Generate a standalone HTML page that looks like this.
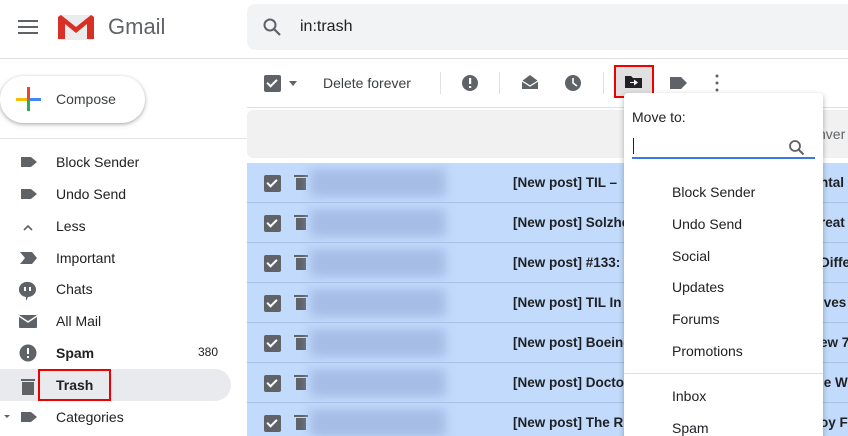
<!DOCTYPE html>
<html><head><style>
*{margin:0;padding:0;box-sizing:border-box}
html,body{width:848px;height:436px;overflow:hidden}
body{background:#fff;font-family:"Liberation Sans",Arial,sans-serif;color:#202124;position:relative}
.a{position:absolute;white-space:nowrap}
.side{font-size:14px;color:#202124}
.side div.t{position:absolute;left:56px}
.row{position:absolute;left:247px;width:601px;height:40px;background:#c2dbfc;border-bottom:1px solid #a9c1e6;overflow:hidden}
.cb{position:absolute;width:17px;height:17px;background:#5f6368;border-radius:2px}
.cb:after{content:"";position:absolute;left:5px;top:2px;width:4px;height:8px;border:solid #fff;border-width:0 2px 2px 0;transform:rotate(45deg)}
.subj{position:absolute;left:266px;top:12px;font-size:13.5px;font-weight:bold;color:#202124;white-space:nowrap}
.blur{position:absolute;left:63px;top:6px;width:136px;height:28px;background:#a6bde6;filter:blur(5px)}
.menu div.i{position:absolute;left:48px;font-size:14px;color:#202124}
</style></head><body>
<div class="a" style="left:18px;top:20px;width:20px;height:2px;background:#5f6368;box-shadow:0 6px 0 #5f6368,0 12px 0 #5f6368"></div>
<svg class="a" style="left:57px;top:14px" width="38" height="27" viewBox="0 0 38 27"><rect x="1" y="1" width="36" height="25" rx="2" fill="#ececec"/><path d="M1 3v22h7V10l11 9 11-9v15h7V3l-3-2-15 12L4 1z" fill="#d93025"/></svg>
<div class="a" style="left:108px;top:14px;font-size:22px;color:#5f6368">Gmail</div>
<div class="a" style="left:247px;top:4px;width:601px;height:46px;background:#f1f3f4;border-radius:8px 0 0 8px"></div>
<svg class="a" style="left:262px;top:17px" width="20" height="20" viewBox="0 0 20 20"><circle cx="8" cy="8" r="5.5" fill="none" stroke="#5f6368" stroke-width="2"/><path d="M12 12l6 6" stroke="#5f6368" stroke-width="2.2"/></svg>
<div class="a" style="left:300px;top:18px;font-size:16px">in:trash</div>
<div class="a" style="left:0;top:58px;width:848px;height:1px;background:#e0e0e0"></div>
<div class="a" style="left:0;top:76px;width:145px;height:47px;border-radius:24px;background:#fff;box-shadow:0 1px 3px rgba(60,64,67,.35),0 2px 6px rgba(60,64,67,.15)"></div>
<div class="a" style="left:27px;top:87px;width:3px;height:12px;background:#ea4335"></div>
<div class="a" style="left:27px;top:99px;width:3px;height:12px;background:#34a853"></div>
<div class="a" style="left:16px;top:98px;width:11px;height:3px;background:#fbbc04"></div>
<div class="a" style="left:30px;top:98px;width:11px;height:3px;background:#4285f4"></div>
<div class="a" style="left:56px;top:91px;font-size:14px;color:#3c4043">Compose</div>
<div class="a" style="left:0;top:138px;width:247px;height:1px;background:#e4e4e4"></div>
<div class="a" style="left:0;top:369px;width:231px;height:32px;background:#e8eaed;border-radius:0 16px 16px 0"></div>
<div class="side">
<div class="t" style="top:154px">Block Sender</div>
<div class="t" style="top:186px">Undo Send</div>
<div class="t" style="top:218px">Less</div>
<div class="t" style="top:250px">Important</div>
<div class="t" style="top:281px">Chats</div>
<div class="t" style="top:313px">All Mail</div>
<div class="t" style="top:345px;font-weight:bold">Spam</div>
<div class="a" style="left:198px;top:345px;font-size:12px;color:#202124">380</div>
<div class="t" style="top:377px;font-weight:bold">Trash</div>
<div class="t" style="top:409px">Categories</div>
</div>
<svg class="a" style="left:0;top:150px" width="50" height="286">
<g fill="#5f6368">
<path d="M21 7h10l6 5-6 5H21z"/>
<path d="M21 39h10l6 5-6 5H21z"/>
<path d="M24 80l4-4 4 4" fill="none" stroke="#5f6368" stroke-width="1.6"/>
<path d="M20 102h12l5 6-5 6H20l5-6z"/>
<path d="M28 132a8 7.5 0 1 1 0 15l-2 4v-4a8 7.5 0 0 1 2-15z"/><rect x="24" y="137" width="2" height="4" fill="#fff"/><rect x="29" y="137" width="2" height="4" fill="#fff"/>
<rect x="19" y="165" width="18" height="13" rx="1"/><path d="M19 166l9 6 9-6" fill="none" stroke="#fff" stroke-width="1.5"/>
<circle cx="28" cy="203" r="8.5"/><rect x="27" y="198" width="2" height="6" fill="#fff"/><rect x="27" y="206" width="2" height="2" fill="#fff"/>
<rect x="21" y="229" width="14" height="2"/><rect x="22" y="232" width="12" height="13"/>
<path d="M4 265h6l-3 3z"/><path d="M21 262h10l6 5-6 5H21z"/>
</g></svg>
<div class="a" style="left:38px;top:369px;width:73px;height:32px;border:2px solid #e00"></div>
<div class="cb" style="left:264px;top:75px"></div>
<div class="a" style="left:289px;top:81px;border:4px solid transparent;border-top:5px solid #5f6368"></div>
<div class="a" style="left:323px;top:75px;font-size:14px;color:#3c4043">Delete forever</div>
<div class="a" style="left:440px;top:72px;width:1px;height:22px;background:#e0e0e0"></div>
<div class="a" style="left:499px;top:72px;width:1px;height:22px;background:#e0e0e0"></div>
<div class="a" style="left:603px;top:72px;width:1px;height:22px;background:#e0e0e0"></div>
<svg class="a" style="left:455px;top:68px" width="280" height="32"><g fill="#5f6368">
<circle cx="15" cy="15" r="8"/><rect x="14" y="10" width="2.2" height="6" fill="#fff"/><rect x="14" y="18" width="2.2" height="2" fill="#fff"/>
<path d="M67 13l8-6 8 6v8H67z"/><path d="M67 13l8 5 8-5" fill="none" stroke="#fff" stroke-width="1.3"/>
<circle cx="118" cy="15" r="8"/><path d="M118 10v5l4 3" fill="none" stroke="#fff" stroke-width="1.6"/>
<path d="M215 9h11l6 6-6 6H215z"/>
<circle cx="262" cy="8" r="1.5"/><circle cx="262" cy="15" r="1.5"/><circle cx="262" cy="22" r="1.5"/>
</g></svg>
<div class="a" style="left:614px;top:65px;width:40px;height:33px;border:2px solid #e00;background:#e0e0e0"></div>
<svg class="a" style="left:624px;top:72px" width="20" height="18"><path d="M1 4h6l2 2h9v10H1z" fill="#202124"/><path d="M6 10h4V7.5l4 3-4 3V11H6z" fill="#fff"/></svg>
<div class="a" style="left:247px;top:107px;width:601px;height:1px;background:#e0e0e0"></div>
<div class="a" style="left:247px;top:110px;width:601px;height:48px;background:#f1f1f1;border-radius:6px 0 0 6px"></div>
<div class="a" style="left:818px;top:126px;font-size:14px;color:#5f6368">nver</div>
<div class="row" style="top:163px"><div class="cb" style="left:17px;top:12px"></div><div class="a" style="left:47px;top:12px;width:14px;height:2px;background:#5f6368"></div><div class="a" style="left:49px;top:15px;width:10px;height:12px;background:#5f6368"></div><div class="blur"></div><div class="subj">[New post] TIL – </div><div class="subj" style="left:573px">ntal</div></div>
<div class="row" style="top:203px"><div class="cb" style="left:17px;top:12px"></div><div class="a" style="left:47px;top:12px;width:14px;height:2px;background:#5f6368"></div><div class="a" style="left:49px;top:15px;width:10px;height:12px;background:#5f6368"></div><div class="blur"></div><div class="subj">[New post] Solzhe</div><div class="subj" style="left:573px">reat</div></div>
<div class="row" style="top:243px"><div class="cb" style="left:17px;top:12px"></div><div class="a" style="left:47px;top:12px;width:14px;height:2px;background:#5f6368"></div><div class="a" style="left:49px;top:15px;width:10px;height:12px;background:#5f6368"></div><div class="blur"></div><div class="subj">[New post] #133:</div><div class="subj" style="left:573px">Diffe</div></div>
<div class="row" style="top:283px"><div class="cb" style="left:17px;top:12px"></div><div class="a" style="left:47px;top:12px;width:14px;height:2px;background:#5f6368"></div><div class="a" style="left:49px;top:15px;width:10px;height:12px;background:#5f6368"></div><div class="blur"></div><div class="subj">[New post] TIL In</div><div class="subj" style="left:573px">lves</div></div>
<div class="row" style="top:323px"><div class="cb" style="left:17px;top:12px"></div><div class="a" style="left:47px;top:12px;width:14px;height:2px;background:#5f6368"></div><div class="a" style="left:49px;top:15px;width:10px;height:12px;background:#5f6368"></div><div class="blur"></div><div class="subj">[New post] Boeing</div><div class="subj" style="left:573px">ew 7</div></div>
<div class="row" style="top:363px"><div class="cb" style="left:17px;top:12px"></div><div class="a" style="left:47px;top:12px;width:14px;height:2px;background:#5f6368"></div><div class="a" style="left:49px;top:15px;width:10px;height:12px;background:#5f6368"></div><div class="blur"></div><div class="subj">[New post] Docto</div><div class="subj" style="left:573px">le W</div></div>
<div class="row" style="top:403px"><div class="cb" style="left:17px;top:12px"></div><div class="a" style="left:47px;top:12px;width:14px;height:2px;background:#5f6368"></div><div class="a" style="left:49px;top:15px;width:10px;height:12px;background:#5f6368"></div><div class="blur"></div><div class="subj">[New post] The R</div><div class="subj" style="left:573px">oy F</div></div>
<div class="a menu" style="left:624px;top:93px;width:199px;height:360px;background:#fff;border-radius:4px;box-shadow:0 2px 6px rgba(0,0,0,.3)">
<div class="a" style="left:8px;top:16px;font-size:14px">Move to:</div>
<div class="a" style="left:9px;top:45px;width:1px;height:16px;background:#202124"></div>
<svg class="a" style="left:164px;top:46px" width="18" height="18"><circle cx="7" cy="7" r="5" fill="none" stroke="#5f6368" stroke-width="1.8"/><path d="M10.5 10.5l5 5" stroke="#5f6368" stroke-width="2"/></svg>
<div class="a" style="left:8px;top:64px;width:183px;height:2px;background:#3b78e7"></div>
<div class="i" style="top:91px">Block Sender</div>
<div class="i" style="top:123px">Undo Send</div>
<div class="i" style="top:155px">Social</div>
<div class="i" style="top:186px">Updates</div>
<div class="i" style="top:218px">Forums</div>
<div class="i" style="top:250px">Promotions</div>
<div class="a" style="left:0;top:280px;width:199px;height:1px;background:#e0e0e0"></div>
<div class="i" style="top:295px">Inbox</div>
<div class="i" style="top:327px">Spam</div>
</div>
</body></html>
